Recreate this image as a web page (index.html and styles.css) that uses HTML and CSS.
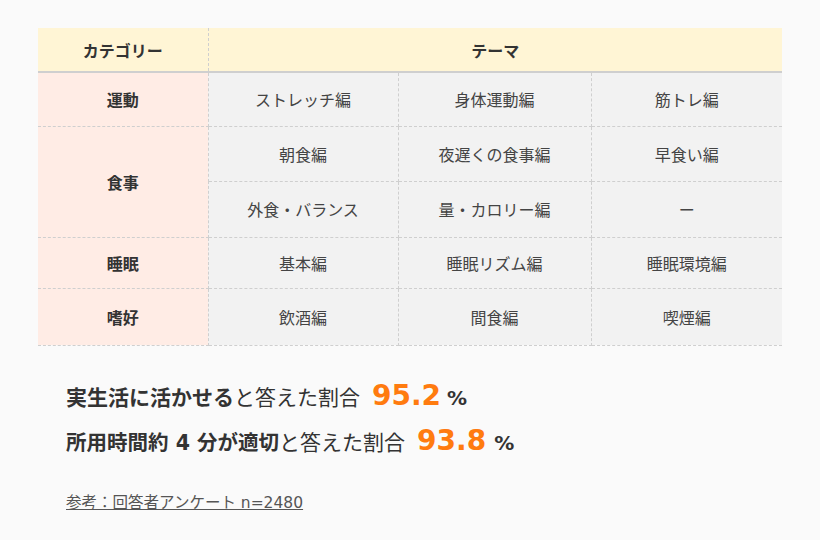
FILE: index.html
```html
<!DOCTYPE html>
<html lang="ja">
<head>
<meta charset="utf-8">
<link rel="stylesheet" href="styles.css">
</head>
<body>
<main class="page">
  <table class="themes">
    <colgroup>
      <col class="c-cat">
      <col class="c-t1">
      <col class="c-t2">
      <col class="c-t3">
    </colgroup>
    <thead>
      <tr>
        <th class="h-cat">カテゴリー</th>
        <th class="h-theme" colspan="3">テーマ</th>
      </tr>
    </thead>
    <tbody>
      <tr class="r1">
        <th class="cat">運動</th>
        <td>ストレッチ編</td>
        <td>身体運動編</td>
        <td>筋トレ編</td>
      </tr>
      <tr class="r2">
        <th class="cat" rowspan="2">食事</th>
        <td>朝食編</td>
        <td>夜遅くの食事編</td>
        <td>早食い編</td>
      </tr>
      <tr class="r3">
        <td>外食・バランス</td>
        <td>量・カロリー編</td>
        <td>ー</td>
      </tr>
      <tr class="r4">
        <th class="cat">睡眠</th>
        <td>基本編</td>
        <td>睡眠リズム編</td>
        <td>睡眠環境編</td>
      </tr>
      <tr class="r5">
        <th class="cat">嗜好</th>
        <td>飲酒編</td>
        <td>間食編</td>
        <td>喫煙編</td>
      </tr>
    </tbody>
  </table>

  <section class="stats">
    <p class="stat"><strong>実生活に活かせる</strong>と答えた割合<span class="num">95.2</span><span class="pct">%</span></p>
    <p class="stat stat-2"><strong>所用時間約 4 分が適切</strong>と答えた割合<span class="num">93.8</span><span class="pct">%</span></p>
    <p class="ref"><a class="ref-link">参考：回答者アンケート n=2480</a></p>
  </section>
</main>
</body>
</html>
```

FILE: styles.css
```css
html, body {
  margin: 0;
  padding: 0;
  background: #fafafa;
}

body {
  font-family: "DejaVu Sans", "Noto Sans CJK JP", sans-serif;
  color: #333;
}

.page {
  padding: 28px 38px 0;
}

.themes {
  width: 744px;
  border-collapse: collapse;
  table-layout: fixed;
  font-size: 16px;
}

.c-cat { width: 170px; }
.c-t1 { width: 190px; }
.c-t2 { width: 193px; }
.c-t3 { width: 191px; }

.themes th,
.themes td {
  padding: 0;
  text-align: center;
  vertical-align: middle;
  font-family: "Noto Sans CJK JP", sans-serif;
}

.themes thead th {
  height: 43px;
  background: #fff5d5;
  font-weight: bold;
  color: #333;
  border-bottom: 2px solid #cfcfcf;
}

.h-cat {
  border-right: 1px dashed #cfcfcf;
}

.themes tbody th,
.themes tbody td {
  border-bottom: 1px dashed #cfcfcf;
  border-right: 1px dashed #cfcfcf;
}

.themes tbody td:last-child {
  border-right: none;
}

.themes tbody th.cat {
  background: #ffece5;
  font-weight: bold;
  color: #333;
}

.themes tbody td {
  background: #f2f2f2;
  color: #444;
  font-weight: normal;
}

.r1 { height: 54px; }
.r2 { height: 55px; }
.r3 { height: 56px; }
.r4 { height: 51px; }
.r5 { height: 57px; }

.stats {
  padding: 28px 0 0 28px;
}

.stat {
  margin: 0;
  font-size: 21px;
  line-height: 45px;
  height: 45px;
  color: #333;
  font-family: "Noto Sans CJK JP", sans-serif;
}

.stat strong {
  font-weight: bold;
  font-family: "DejaVu Sans", "Noto Sans CJK JP", sans-serif;
}

.stat-2 strong {
  font-size: 20.5px;
}

.num {
  font-family: "DejaVu Sans", sans-serif;
  font-weight: bold;
  font-size: 28px;
  line-height: 1;
  color: #ff7b0f;
  margin-left: 12px;
  margin-right: 6px;
}

.stat-2 .num {
  margin-left: 12px;
  margin-right: 8px;
}

.pct {
  font-family: "DejaVu Sans", sans-serif;
  font-weight: bold;
  font-size: 20px;
  line-height: 1;
  color: #333;
}

.ref {
  margin: 26px 0 0;
  font-size: 15.5px;
  color: #555;
}

.ref-link {
  text-decoration: underline;
  color: #555;
}
```
